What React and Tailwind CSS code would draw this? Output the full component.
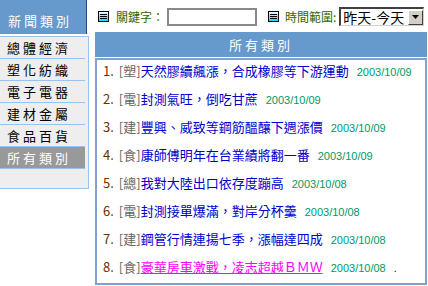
import React from 'react';

const categories = ['總體經濟', '塑化紡織', '電子電器', '建材金屬', '食品百貨', '所有類別'];

const news = [
  { cat: '塑', title: '天然膠續飆漲，合成橡膠等下游運動', date: '2003/10/09' },
  { cat: '電', title: '封測氣旺，倒吃甘蔗', date: '2003/10/09' },
  { cat: '建', title: '豐興、威致等鋼筋醞釀下週漲價', date: '2003/10/09' },
  { cat: '食', title: '康師傅明年在台業績將翻一番', date: '2003/10/09' },
  { cat: '總', title: '我對大陸出口依存度蹦高', date: '2003/10/08' },
  { cat: '電', title: '封測接單爆滿，對岸分杯羹', date: '2003/10/08' },
  { cat: '建', title: '鋼管行情連揚七季，漲幅達四成', date: '2003/10/08' },
  { cat: '食', title: '豪華房車激戰，凌志超越ＢＭＷ', date: '2003/10/08', hover: true },
];

const cjk = { fontFamily: '"Noto Sans CJK TC", "Liberation Sans", sans-serif' };

const ListIcon = () => (
  <svg width="11" height="11" viewBox="0 0 11 11" className="shrink-0">
    <defs>
      <linearGradient id="iconfill" x1="0" y1="0" x2="0" y2="1">
        <stop offset="0" stopColor="#ffffff" />
        <stop offset="1" stopColor="#00d8f0" />
      </linearGradient>
    </defs>
    <rect x="0.5" y="0.5" width="10" height="10" fill="url(#iconfill)" stroke="#000" />
    <path d="M2 3.5h7M2 5.5h7M2 7.5h7" stroke="#000" />
  </svg>
);

const App = () => {
  return (
    <div className="flex w-[428px] h-[286px] bg-white text-[13px]" style={cjk}>
      {/* Sidebar */}
      <div className="w-[89px] shrink-0">
        <div className="h-[34px] w-[87px] bg-[#6699cc] border-r border-[#24487e] pt-[12px] pl-[8px] leading-[18px] text-white tracking-[3px]">
          新聞類別
        </div>
        <div className="mt-[2px] bg-[#eeeeee] border-t border-r border-b border-[#99c2ee] pb-[19px]">
          {categories.map((c, i) => (
            <div
              key={c}
              className={
                i === categories.length - 1
                  ? 'w-[85px] h-[22px] border-b border-[#99c2ee] bg-[#999999] text-white pl-[7px] leading-[21px] tracking-[3px]'
                  : 'w-[85px] h-[22px] border-b border-[#99c2ee] text-black pl-[7px] leading-[21px] tracking-[3px]'
              }
            >
              {c}
            </div>
          ))}
        </div>
      </div>

      {/* Main */}
      <div className="ml-[6px] w-[332px] pt-[7px]">
        <div className="flex items-center h-[19px] pl-[3px] whitespace-nowrap">
          <ListIcon />
          <span className="ml-[7px] shrink-0 text-[12px] text-[#336600]">關鍵字：</span>
          <div className="ml-[3px] shrink-0 w-[90px] h-[18px] border-2 border-[#8a8a8a] bg-white"></div>
          <div className="ml-[11px] shrink-0 flex">
            <ListIcon />
          </div>
          <span className="ml-[6px] shrink-0 text-[12px] text-[#336600]">時間範圍:</span>
          <div className="ml-[3px] shrink-0 w-[85px] h-[19px] flex border-t-2 border-l-2 border-b border-r border-t-[#404040] border-l-[#404040] border-b-[#d4d0c8] border-r-[#d4d0c8] bg-white">
            <span className="flex-1 pl-[2px] text-[14px] leading-[16px] text-black">昨天-今天</span>
            <div className="w-[15px] h-[15px] mt-[0.5px] bg-[#d4d0c8] border-t border-l border-white border-b border-r border-b-[#404040] border-r-[#404040] flex items-center justify-center">
              <svg width="7" height="4" viewBox="0 0 7 4">
                <path d="M0 0h7L3.5 4z" fill="#000" />
              </svg>
            </div>
          </div>
        </div>

        <div className="mt-[6px] h-[25px] bg-[#6699cc] flex items-center justify-center text-white tracking-[3px]">
          所有類別
        </div>

        <div className="mt-[1px] h-[227px] border-2 border-[#7ea3d3] pl-[6px] pt-[1px] flex flex-col gap-[8px]">
          {news.map((n, i) => (
            <div key={i} className="flex items-baseline h-[20px] leading-[20px] whitespace-nowrap">
              <span className="text-[#663300] mr-[5px]">{i + 1}.</span>
              <span className="text-[#666666]">[{n.cat}]</span>
              <span className={n.hover ? 'text-[#ff00ff] underline' : 'text-[#0000cc]'}>{n.title}</span>
              <span className="ml-[8px] text-[11px] text-[#009966]" style={{ fontFamily: '"Liberation Sans", sans-serif' }}>
                {n.date}
              </span>
              {n.hover && <span className="ml-[8px] text-[10px] text-[#0000cc]">.</span>}
            </div>
          ))}
        </div>
      </div>
    </div>
  );
};

export default App;
